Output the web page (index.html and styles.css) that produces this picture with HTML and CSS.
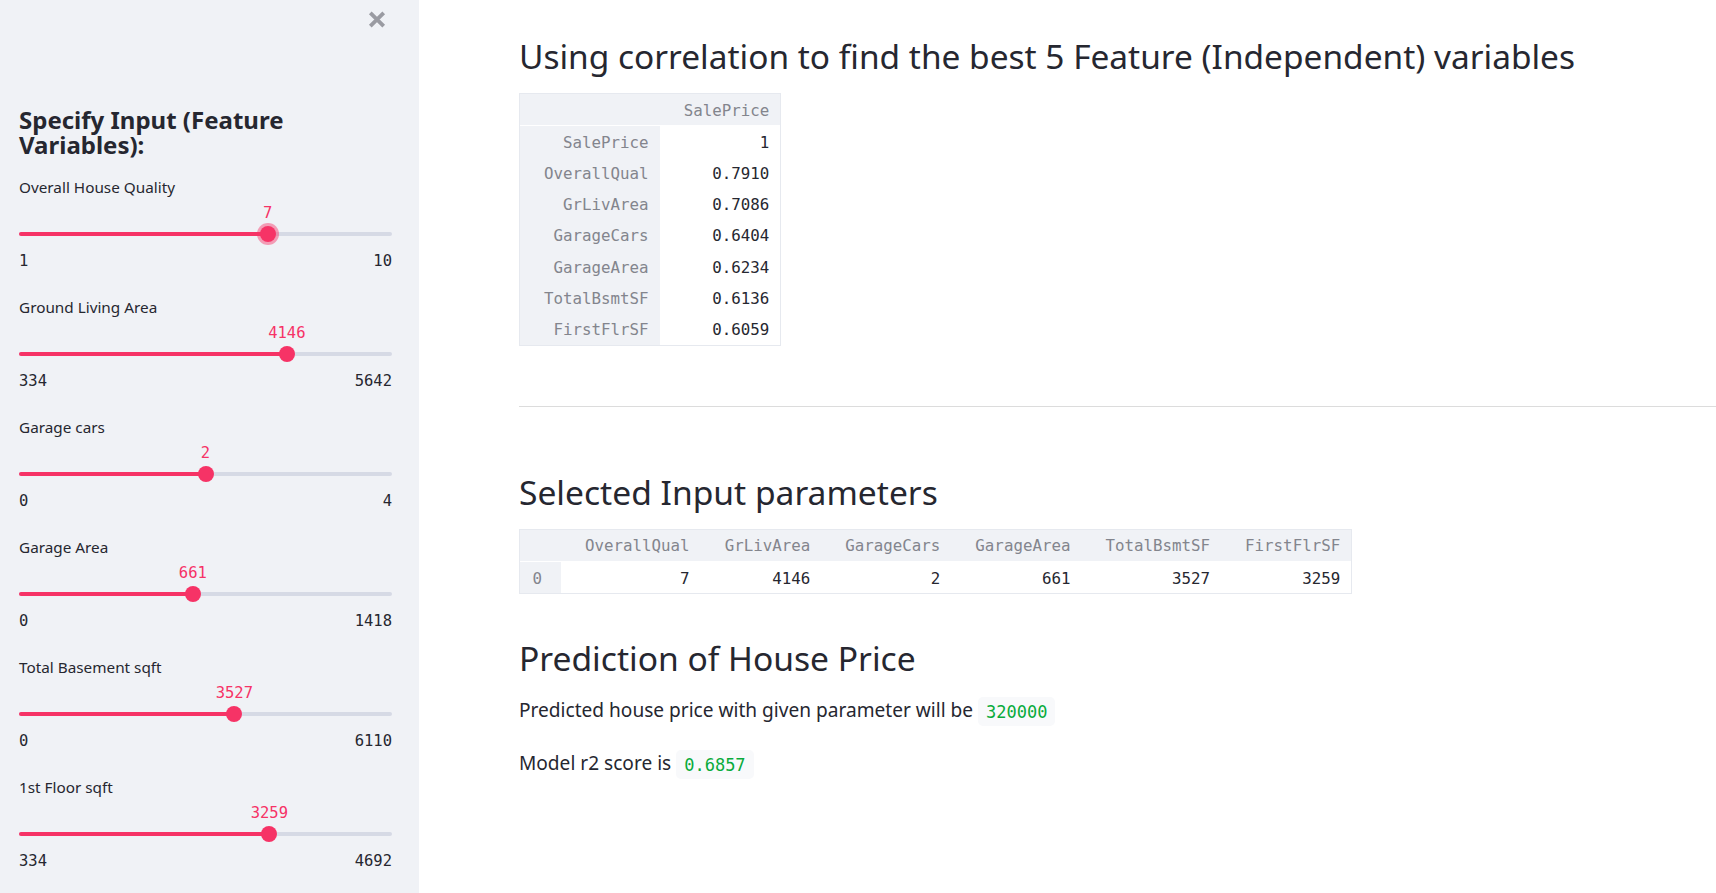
FILE: index.html
```html
<!DOCTYPE html>
<html lang="en">
<head>
<meta charset="utf-8">
<title>House Price Prediction</title>
<link rel="stylesheet" href="styles.css">
</head>
<body>
<div class="app">
  <aside class="sidebar">
    <div class="sb-top">
      <button class="close" aria-label="Close sidebar">
        <svg width="18" height="17" viewBox="0 0 18 17"><path d="M2.3 1.8 L15.7 15.2 M15.7 1.8 L2.3 15.2" stroke="#9a9ba2" stroke-width="3.8" fill="none"/></svg>
      </button>
    </div>
    <h2 class="sb-title">Specify Input (Feature Variables):</h2>

    <div class="slider">
      <div class="s-label">Overall House Quality</div>
      <div class="s-body">
        <div class="s-track">
          <div class="s-fill" style="width:66.667%"></div>
          <div class="s-thumb focus" style="left:66.667%"><span class="s-val">7</span></div>
        </div>
      </div>
      <div class="s-minmax"><span>1</span><span>10</span></div>
    </div>

    <div class="slider">
      <div class="s-label">Ground Living Area</div>
      <div class="s-body">
        <div class="s-track">
          <div class="s-fill" style="width:71.816%"></div>
          <div class="s-thumb" style="left:71.816%"><span class="s-val">4146</span></div>
        </div>
      </div>
      <div class="s-minmax"><span>334</span><span>5642</span></div>
    </div>

    <div class="slider">
      <div class="s-label">Garage cars</div>
      <div class="s-body">
        <div class="s-track">
          <div class="s-fill" style="width:50%"></div>
          <div class="s-thumb" style="left:50%"><span class="s-val">2</span></div>
        </div>
      </div>
      <div class="s-minmax"><span>0</span><span>4</span></div>
    </div>

    <div class="slider">
      <div class="s-label">Garage Area</div>
      <div class="s-body">
        <div class="s-track">
          <div class="s-fill" style="width:46.615%"></div>
          <div class="s-thumb" style="left:46.615%"><span class="s-val">661</span></div>
        </div>
      </div>
      <div class="s-minmax"><span>0</span><span>1418</span></div>
    </div>

    <div class="slider">
      <div class="s-label">Total Basement sqft</div>
      <div class="s-body">
        <div class="s-track">
          <div class="s-fill" style="width:57.725%"></div>
          <div class="s-thumb" style="left:57.725%"><span class="s-val">3527</span></div>
        </div>
      </div>
      <div class="s-minmax"><span>0</span><span>6110</span></div>
    </div>

    <div class="slider">
      <div class="s-label">1st Floor sqft</div>
      <div class="s-body">
        <div class="s-track">
          <div class="s-fill" style="width:67.118%"></div>
          <div class="s-thumb" style="left:67.118%"><span class="s-val">3259</span></div>
        </div>
      </div>
      <div class="s-minmax"><span>334</span><span>4692</span></div>
    </div>
  </aside>

  <main class="main">
    <h1 class="hd hd-first">Using correlation to find the best 5 Feature (Independent) variables</h1>
    <table class="df df1">
      <thead>
        <tr><th class="blank"></th><th>SalePrice</th></tr>
      </thead>
      <tbody>
        <tr><th>SalePrice</th><td>1</td></tr>
        <tr><th>OverallQual</th><td>0.7910</td></tr>
        <tr><th>GrLivArea</th><td>0.7086</td></tr>
        <tr><th>GarageCars</th><td>0.6404</td></tr>
        <tr><th>GarageArea</th><td>0.6234</td></tr>
        <tr><th>TotalBsmtSF</th><td>0.6136</td></tr>
        <tr><th>FirstFlrSF</th><td>0.6059</td></tr>
      </tbody>
    </table>

    <hr class="rule">

    <h2 class="hd hd-sel">Selected Input parameters</h2>
    <table class="df df2">
      <thead>
        <tr><th class="blank idx"></th><th>OverallQual</th><th>GrLivArea</th><th>GarageCars</th><th>GarageArea</th><th>TotalBsmtSF</th><th>FirstFlrSF</th></tr>
      </thead>
      <tbody>
        <tr><th class="idx">0</th><td>7</td><td>4146</td><td>2</td><td>661</td><td>3527</td><td>3259</td></tr>
      </tbody>
    </table>

    <h2 class="hd hd-pred">Prediction of House Price</h2>
    <p class="txt txt1">Predicted house price with given parameter will be <code class="val">320000</code></p>
    <p class="txt txt2">Model r2 score is <code class="val">0.6857</code></p>
  </main>
</div>
</body>
</html>
```

FILE: styles.css
```css
html, body {
  margin: 0;
  padding: 0;
  background: #ffffff;
}

body {
  font-family: "Noto Sans", "Open Sans", sans-serif;
  color: #262730;
  overflow: hidden;
}

.app {
  display: flex;
  height: 893px;
}

/* ---------- sidebar ---------- */
.sidebar {
  width: 419px;
  flex: 0 0 419px;
  box-sizing: border-box;
  background: #f0f2f6;
  padding: 0 27px 0 19px;
}

.sb-top {
  height: 40px;
  display: flex;
  justify-content: flex-end;
  align-items: flex-start;
  padding-top: 11px;
  padding-right: 6px;
  box-sizing: border-box;
}

.close {
  border: 0;
  background: transparent;
  padding: 0;
  width: 18px;
  height: 17px;
  display: block;
  cursor: pointer;
}
.close svg { display: block; }

.sb-title {
  margin: 67px 0 20px 0;
  font-size: 24px;
  line-height: 25px;
  font-weight: 700;
  color: #262730;
}

.slider {
  margin-bottom: 26px;
}

.s-label {
  font-size: 15.3px;
  line-height: 20px;
  height: 20px;
  color: #262730;
}

.s-body {
  padding: 35px 0 15px 0;
}

.s-track {
  position: relative;
  height: 4px;
  border-radius: 2px;
  background: #d6dae5;
}

.s-fill {
  height: 4px;
  border-radius: 2px;
  background: #f63366;
}

.s-thumb {
  position: absolute;
  top: 50%;
  width: 16px;
  height: 16px;
  border-radius: 50%;
  background: #f63366;
  transform: translate(-50%, -50%);
}

.s-thumb.focus {
  box-shadow: 0 0 0 3px rgba(246, 51, 102, 0.45);
}

.s-val {
  position: absolute;
  top: -23px;
  left: 50%;
  transform: translateX(-50%);
  font-family: "DejaVu Sans Mono", "Liberation Mono", monospace;
  font-size: 15.5px;
  line-height: 20px;
  color: #f63366;
  white-space: nowrap;
}

.s-minmax {
  display: flex;
  justify-content: space-between;
  font-family: "DejaVu Sans Mono", "Liberation Mono", monospace;
  font-size: 15.5px;
  line-height: 20px;
  height: 20px;
  color: #262730;
}

/* ---------- main ---------- */
.main {
  flex: 1 1 auto;
  min-width: 0;
  padding: 36px 0 0 100px;
  box-sizing: border-box;
}

.hd {
  margin: 0;
  font-size: 33.6px;
  line-height: 40px;
  font-weight: 400;
  color: #262730;
  white-space: nowrap;
}
.hd-first { font-size: 33.45px; }

.df {
  border-collapse: separate;
  border-spacing: 0;
  border: 1px solid #e6e9ef;
  font-family: "DejaVu Sans Mono", "Liberation Mono", monospace;
  font-size: 15.8px;
}

.df1 { margin-top: 17px; }
.df2 { margin-top: 17.5px; }

.df th,
.df td {
  padding: 0 11px 0 24px;
  text-align: right;
  white-space: nowrap;
  font-weight: 400;
}

.df thead th {
  background: #f0f2f6;
  color: #83858d;
  height: 30.5px;
  line-height: 27.5px;
  padding-top: 3px;
  box-sizing: border-box;
  border-bottom: 1px solid #ffffff;
}
.df2 thead th {
  line-height: 29.5px;
  padding-top: 1px;
}

.df tbody th {
  background: #f0f2f6;
  color: #83858d;
}

.df tbody td {
  background: #ffffff;
  color: #262730;
}

.df tbody th,
.df tbody td {
  height: 31.3px;
  line-height: 28.3px;
  padding-top: 3px;
  box-sizing: border-box;
}

.df2 .idx {
  padding: 0 19px 0 11px;
  width: 41px;
  box-sizing: border-box;
}
.df2 tbody th.idx { padding-top: 3px; }
.df2 thead th.idx { padding-top: 1px; }

.rule {
  margin: 60.6px 0 0 0;
  border: 0;
  border-top: 1px solid #dcdcdc;
  height: 0;
}

.hd-sel { margin-top: 64.5px; }
.hd-pred { margin-top: 44.5px; }

.txt {
  margin: 0;
  font-size: 19.1px;
  line-height: 30px;
  color: #262730;
}
.txt1 { margin-top: 17px; }
.txt2 { margin-top: 21.8px; }

.val {
  font-family: "DejaVu Sans Mono", "Liberation Mono", monospace;
  font-size: 17px;
  color: #09ab3b;
  background: #f8f9fb;
  border-radius: 5px;
  padding: 4.6px 8px;
}
```
